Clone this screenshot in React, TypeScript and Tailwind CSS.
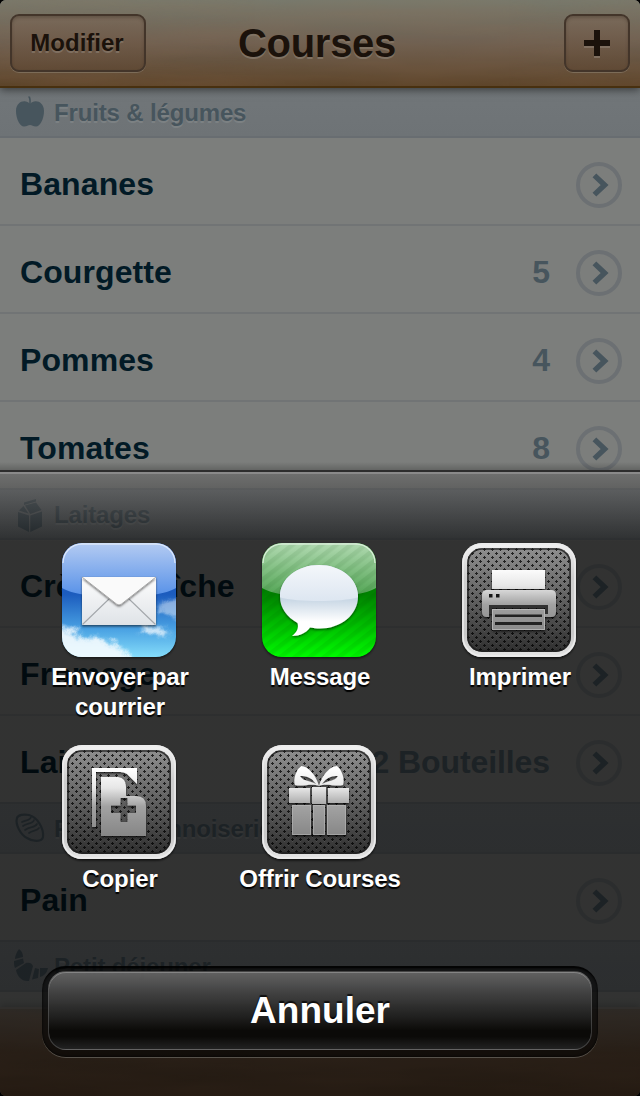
import React from "react";

function Chevron() {
  return (
    <svg width="46" height="46" viewBox="0 0 46 46" className="block shrink-0">
      <circle cx="23" cy="23" r="21" fill="none" stroke="#6c7073" strokeWidth="4" />
      <path d="M18.400 13.400 L28.600 23 L18.400 32.600" fill="none" stroke="#47555d" strokeWidth="5.400" />
    </svg>
  );
}

function Row({ name, qty, last }: { name: string; qty?: string; last?: boolean }) {
  return (
    <div
      className={
        "flex h-[88px] items-center border-b-2 pl-5 pr-[18px] pt-2 " +
        (last ? "border-[#696e71]" : "border-[#717475]")
      }
    >
      <span className="-mt-[2px] flex-1 text-[32px] leading-none font-bold tracking-[0.1px] text-[#021a26]">{name}</span>
      {qty && (
        <span className="-mt-[2px] mr-[26px] text-[32px] leading-none font-bold tracking-[-0.1px] text-[#47555d]">{qty}</span>
      )}
      <Chevron />
    </div>
  );
}

function Section({ title, icon }: { title: string; icon: React.ReactNode }) {
  return (
    <div className="flex h-[50px] items-center border-b-2 border-[#686d71] bg-linear-to-b from-[#717679] to-[#6e7376] pl-3">
      <svg width="36" height="40" viewBox="0 0 36 40" className="block shrink-0">
        {icon}
      </svg>
      <span className="ml-[6px] mt-[2px] whitespace-nowrap text-[24px] leading-none font-bold tracking-[-0.15px] text-[#47555d] [text-shadow:0_2px_0_#7c8183]">
        {title}
      </span>
    </div>
  );
}

const apple = (
  <g fill="#47555d">
    <path d="M18 12 C14 7 4 9 4 19 C4 27 8 34.500 12 34.500 C15 34.500 16 33 18 33 C20 33 21 34.500 24 34.500 C28 34.500 32 27 32 19 C32 9 22 7 18 12Z" />
    <path d="M16 4.500 L18 4.500 C19 7 19 9 18.600 13 L17 13 C17.600 9 17.400 7 16 4.500Z" />
  </g>
);

const milk = (
  <g fill="#47555d">
    <path d="M6 18 L17 21.500 V38 L6 32.500Z M18.300 21.500 L30 17.500 V32.500 L18.300 38Z" />
    <path d="M7 16.500 L11.500 12 L16.500 19.500Z M13 11.500 L24 8.500 L29.500 16 L18.300 20Z M12 8.500 L24 5 V7.400 L12 11Z" />
  </g>
);

const bread = (
  <g fill="none" stroke="#47555d" strokeWidth="1.700" strokeLinecap="round">
    <path d="M5 10 C6 6.500 12 6 17 7 C25 9 32 20 31 29 C30 34 21 34 15 30 C9 27 3 17 5 10Z" strokeWidth="2.200" />
    <path d="M10 14 C13 12 18 13 19 9 M11 18 C15 15 21 16 22 12 M13 22 C18 18 23 20 25 16 M17 25 C21 22 25 23 27 20" />
  </g>
);

const croissant = (
  <g fill="#47555d">
    <path d="M7 3 C10 5 11 8 11 11 L3 13 C3 9 5 6 7 3Z" />
    <path d="M2 15 L11 12.500 L12 17 L3 22 C2 20 2 18 2 15Z M4 24 L14 17 C17 16 20 17 21 20 L17 35 C10 36 5 30 4 24Z" />
    <path d="M23 22 L27 23 L26 32 L20 33.500Z M28 22 L36 22 C35 27 32 30 28 31Z" />
  </g>
);

function WoodGrain({ height, seed }: { height: number; seed: number }) {
  const id = "grain" + seed;
  return (
    <svg width="640" height={height} className="absolute inset-0 block opacity-20">
      <filter id={id} x="0" y="0" width="100%" height="100%">
        <feTurbulence type="fractalNoise" baseFrequency="0.005 0.04" numOctaves="4" seed={seed} />
        <feColorMatrix values="0 0 0 0 .32  0 0 0 0 .16  0 0 0 0 .09  1.6 0 0 0 -.4" />
      </filter>
      <rect width="640" height={height} filter={`url(#${id})`} />
    </svg>
  );
}

function Mesh({ id, children }: { id: string; children: React.ReactNode }) {
  return (
    <svg width="118" height="120" viewBox="-2 -2 118 120" className="block">
      <defs>
        <linearGradient id={id + "r"} x1="0" y1="0" x2="0" y2="1">
          <stop offset="0" stopColor="#f2f2f2" />
          <stop offset=".3" stopColor="#cecece" />
          <stop offset=".8" stopColor="#c8c8c8" />
          <stop offset="1" stopColor="#e6e6e6" />
        </linearGradient>
        <linearGradient id={id + "b"} x1="0" y1="0" x2="0" y2="1">
          <stop offset="0" stopColor="#8e8e8e" />
          <stop offset=".5" stopColor="#606060" />
          <stop offset="1" stopColor="#2f2f2f" />
        </linearGradient>
        <linearGradient id={id + "g"} gradientUnits="userSpaceOnUse" x1="0" y1="24" x2="0" y2="92">
          <stop offset="0" stopColor="#fff" />
          <stop offset=".28" stopColor="#e6e6e6" />
          <stop offset=".55" stopColor="#a2a2a2" />
          <stop offset="1" stopColor="#858585" />
        </linearGradient>
        <pattern id={id + "p"} width="8" height="8" patternUnits="userSpaceOnUse" x="5" y="5">
          <path d="M1 0h1v1h1v1h-1v1h-1v-1h-1v-1h1z M5 4h1v1h1v1h-1v1h-1v-1h-1v-1h1z" fill="#000" fillOpacity=".75" />
          <path d="M1 3h1v1h-1z M5 7h1v1h-1z" fill="#fff" fillOpacity=".1" />
        </pattern>
        <filter id={id + "s"} x="-20%" y="-20%" width="140%" height="140%">
          <feDropShadow dx="0" dy="1.500" stdDeviation="1" floodOpacity=".75" />
        </filter>
      </defs>
      <rect width="114" height="114" rx="20" fill={`url(#${id}r)`} filter={`url(#${id}s)`} />
      <rect x="1" y="1" width="112" height="112" rx="19" fill="none" stroke="#ececec" strokeWidth="1.600" />
      <rect x="5" y="5" width="104" height="104" rx="15" fill={`url(#${id}b)`} />
      <rect x="5" y="5" width="104" height="104" rx="15" fill={`url(#${id}p)`} />
      <rect x="6" y="6" width="102" height="102" rx="14" fill="none" stroke="#1c1c1c" strokeOpacity=".8" strokeWidth="1.600" />
      <g fill={`url(#${id}g)`} filter={`url(#${id}s)`}>
        {children}
      </g>
    </svg>
  );
}

const TILE = "M20 0H94A20 20 0 0 1 114 20V94A20 20 0 0 1 94 114H20A20 20 0 0 1 0 94V20A20 20 0 0 1 20 0Z";

function MailIcon() {
  return (
    <svg width="118" height="120" viewBox="-2 -2 118 120" className="block">
      <defs>
        <clipPath id="mc"><path d={TILE} /></clipPath>
        <linearGradient id="msky" x1="0" y1="0" x2="0" y2="1">
          <stop offset="0" stopColor="#1f52b4" />
          <stop offset=".45" stopColor="#1c5cbe" />
          <stop offset=".75" stopColor="#48a0e2" />
          <stop offset="1" stopColor="#84dcfa" />
        </linearGradient>
        <linearGradient id="mgl" x1="0" y1="0" x2="0" y2="1">
          <stop offset="0" stopColor="#b4cbf2" />
          <stop offset="1" stopColor="#5590e8" />
        </linearGradient>
        <linearGradient id="menv" x1="0" y1="0" x2="0" y2="1">
          <stop offset="0" stopColor="#fdfdfd" />
          <stop offset="1" stopColor="#dfe3e7" />
        </linearGradient>
        <filter id="cloud" x="-30" y="40" width="180" height="100" filterUnits="userSpaceOnUse">
          <feGaussianBlur stdDeviation="2.200" result="b" />
          <feTurbulence type="fractalNoise" baseFrequency=".1" numOctaves="3" seed="4" result="n" />
          <feDisplacementMap in="b" in2="n" scale="12" xChannelSelector="R" yChannelSelector="G" />
          <feGaussianBlur stdDeviation=".7" />
        </filter>
        <filter id="msh" x="-20%" y="-20%" width="140%" height="150%">
          <feDropShadow dx="0" dy="1.500" stdDeviation="1.200" floodOpacity=".55" />
        </filter>
      </defs>
      <path d={TILE} fill="#111" filter="url(#msh)" />
      <g clipPath="url(#mc)">
        <rect width="114" height="114" fill="url(#msky)" />
        <g fill="#fff" filter="url(#cloud)">
          <path d="M-12 82 C4 84 14 89 24 96 C36 93 46 97 54 104 C62 106 70 112 72 122 H-12Z" fillOpacity=".85" />
          <path d="M76 87 C84 82 98 82 110 90 C100 93 88 94 76 87Z" fillOpacity=".75" />
          <path d="M96 66 C100 57 110 54 122 56 V74 C110 76 100 74 96 66Z" fillOpacity=".45" />
        </g>
        <path d="M0 0H114V45C96 57 18 57 0 45Z" fill="url(#mgl)" />
        <path d="M1 20A19 19 0 0 1 20 1H94A19 19 0 0 1 113 20" fill="none" stroke="#dbe7fa" strokeWidth="1.300" />
      </g>
      <rect x="20" y="34" width="74" height="48" fill="url(#menv)" filter="url(#msh)" />
      <path d="M20.500 81.500 L47 56 M93.500 81.500 L67 56" stroke="#a4a8ac" strokeWidth="1.100" />
      <path d="M20 34H94L59.500 61Q57 63 54.500 61Z" fill="#fafafa" filter="url(#msh)" />
      <path d="M20 34L54.500 61Q57 63 59.500 61L94 34" fill="none" stroke="#a0a0a0" strokeWidth=".9" />
    </svg>
  );
}

function MessageIcon() {
  const bubble =
    "M57 22C78.500 22 96 35.500 96 53.500C96 72 78.500 85.500 58 85.500C54.500 85.500 51 85 48 84.500C44 90 38 93 30 93C35 89 37 85 35.500 80C25 74 18 65 18 53.500C18 35.500 35.500 22 57 22Z";
  return (
    <svg width="118" height="120" viewBox="-2 -2 118 120" className="block">
      <defs>
        <clipPath id="gc"><path d={TILE} /></clipPath>
        <clipPath id="gb"><path d={bubble} /></clipPath>
        <linearGradient id="gg" x1="0" y1="0" x2="0" y2="1">
          <stop offset="0" stopColor="#006a00" />
          <stop offset=".45" stopColor="#008200" />
          <stop offset="1" stopColor="#00fa00" />
        </linearGradient>
        <linearGradient id="ggl" x1="0" y1="0" x2="0" y2="1">
          <stop offset="0" stopColor="#b2dab2" />
          <stop offset="1" stopColor="#4fa351" />
        </linearGradient>
        <linearGradient id="gw" x1="0" y1="0" x2="0" y2="1">
          <stop offset="0" stopColor="#c3d3e2" />
          <stop offset=".5" stopColor="#cbd9e6" />
          <stop offset=".8" stopColor="#fff" />
        </linearGradient>
        <linearGradient id="gw2" x1="0" y1="0" x2="0" y2="1">
          <stop offset="0" stopColor="#f5f8fb" />
          <stop offset="1" stopColor="#dde6f1" />
        </linearGradient>
        <pattern id="gs" width="10" height="9" patternUnits="userSpaceOnUse" patternTransform="rotate(-38)">
          <rect width="10" height="4.500" fill="#003c00" fillOpacity=".08" />
        </pattern>
        <filter id="gsh" x="-20%" y="-20%" width="140%" height="150%">
          <feDropShadow dx="0" dy="1.500" stdDeviation="1.300" floodOpacity=".55" />
        </filter>
      </defs>
      <path d={TILE} fill="#111" filter="url(#gsh)" />
      <g clipPath="url(#gc)">
        <rect width="114" height="114" fill="url(#gg)" />
        <path d="M0 0H114V45C96 57 18 57 0 45Z" fill="url(#ggl)" />
        <rect width="114" height="114" fill="url(#gs)" />
        <path d="M1 20A19 19 0 0 1 20 1H94A19 19 0 0 1 113 20" fill="none" stroke="#d6ecd6" strokeWidth="1.300" />
      </g>
      <path d={bubble} fill="url(#gw)" filter="url(#gsh)" />
      <g clipPath="url(#gb)">
        <path d="M16 20H98V53.500C82 59.500 32 59.500 16 53.500Z" fill="url(#gw2)" />
      </g>
    </svg>
  );
}

function PrintIcon() {
  return (
    <Mesh id="pr">
      <rect x="30" y="27" width="53" height="19" />
      <path d="M25 47H89Q94 47 94 52V69Q94 74 89 74H83V63H27V74H25Q20 74 20 69V52Q20 47 25 47Z" />
      <path d="M27 51h3.500v3.500h-3.500z M34 51h3.500v3.500h-3.500z" fill="#161616" />
      <path d="M27 62H86V71H83V65H30V71H27Z" fill="#333" />
      <path d="M30 66H83V87H30Z" />
      <path d="M33 71.500H80V74H33Z M33 79H80V82H33Z" fill="#222" />
      <path d="M30.500 66.500H82.500V86.500H30.500Z" fill="none" stroke="#ccc" strokeOpacity=".6" />
    </Mesh>
  );
}

function CopyIcon() {
  return (
    <Mesh id="cp">
      <path d="M30 23H75V39L65 29Q62 27 58 27H34V82H30Z" />
      <path
        fillRule="evenodd"
        d="M39 32H56Q64 33 64 42V51H74Q84 51 84 61V91H39Z M58.500 53V60.500H49V68H58.500V77H65.500V68H74V60.500H65.500V53Z"
      />
    </Mesh>
  );
}

function GiftIcon() {
  return (
    <Mesh id="gi">
      <path
        fillRule="evenodd"
        d="M57 41C54 30 46 21 39 21C34 25 31 34 33 40C40 42 50 38 57 41Z M54 39C49 32 45 31 38 31C42 37 47 35 54 39Z"
      />
      <path
        fillRule="evenodd"
        d="M57 41C60 30 68 21 75 21C80 25 83 34 81 40C74 42 64 38 57 41Z M60 39C65 32 69 31 76 31C72 37 67 35 60 39Z"
      />
      <path d="M27 43H48V58H27Z M50 42H64V59H50Z M66 43H87V58H66Z" />
      <path d="M30 60H49V90H30Z M51 60H63V90H51Z M65 60H84V90H65Z" />
      <path
        d="M30.500 60.500H48.500V89.500H30.500Z M51.500 60.500H62.500V89.500H51.500Z M65.500 60.500H83.500V89.500H65.500Z"
        fill="none"
        stroke="#bdbdbd"
        strokeOpacity=".5"
      />
    </Mesh>
  );
}

function Action({ label, children }: { label: string; children: React.ReactNode }) {
  return (
    <div className="flex h-[202px] w-[200px] flex-col items-center">
      <div className="-mt-[2px] mr-[2px] h-[121px]">{children}</div>
      <div className="w-[170px] text-center text-[24px] leading-[30px] font-bold tracking-[-0.1px] text-white [text-shadow:0_2px_1px_#000]">
        {label}
      </div>
    </div>
  );
}

export default function App() {
  return (
    <div className="relative h-[1096px] w-[640px] overflow-hidden bg-black font-['Liberation_Sans',Arial,sans-serif]">
      <div className="flex h-full flex-col overflow-hidden rounded-[6px] bg-[#7c7e7c]">
        <header className="relative z-10 h-[88px] shrink-0 border-b-2 border-[#48300f] bg-linear-to-b from-[#777a6d] via-[#6e6051] to-[#5c4429] shadow-[0_2px_8px_rgba(0,0,0,0.5)]">
          <WoodGrain height={86} seed={7} />
          <div className="relative flex h-[86px] items-center justify-between px-[10px]">
            <div className="flex h-[58px] w-[136px] items-center justify-center rounded-[9px] border-2 border-[#43352a] bg-linear-to-b from-[#7b6858]/70 to-[#5d4733]/70 pr-[2px] text-[24px] font-bold text-[#1b120b] shadow-[0_1px_0_#7c6c58,inset_0_2px_3px_rgba(50,35,25,0.3)] [text-shadow:0_2px_0_#7f6f60]">
              Modifier
            </div>
            <h1 className="flex-1 pr-[76px] text-center text-[40px] leading-none font-bold tracking-[-0.3px] text-[#1b120b] [text-shadow:0_2px_0_#807263]">
              Courses
            </h1>
            <div className="flex h-[58px] w-[66px] items-center justify-center rounded-[9px] border-2 border-[#43352a] bg-linear-to-b from-[#7b6858]/70 to-[#5d4733]/70 pt-[2px] shadow-[0_1px_0_#7c6c58,inset_0_2px_3px_rgba(50,35,25,0.3)]">
              <svg width="26" height="28" viewBox="0 0 26 28">
                <path d="M10 2h6v10h10v6H16v10h-6V18H0v-6h10z" fill="#7f6f60" />
                <path d="M10 0h6v10h10v6H16v10h-6V16H0v-6h10z" fill="#1b120b" />
              </svg>
            </div>
          </div>
        </header>
        <main className="flex-1 overflow-hidden">
          <Section title="Fruits & légumes" icon={apple} />
          <Row name="Bananes" />
          <Row name="Courgette" qty="5" />
          <Row name="Pommes" qty="4" />
          <Row name="Tomates" qty="8" last />
          <Section title="Laitages" icon={milk} />
          <Row name="Crème fraîche" />
          <Row name="Fromage" />
          <Row name="Lait" qty="2 Bouteilles" last />
          <Section title="Pain & viennoiseries" icon={bread} />
          <Row name="Pain" last />
          <Section title="Petit déjeuner" icon={croissant} />
        </main>
        <footer className="relative h-[89px] shrink-0 border-t-2 border-[#77736e] bg-linear-to-b from-[#6d665d] via-[#624b37] to-[#58402b] shadow-[0_-2px_7px_rgba(0,0,0,0.2)]">
          <WoodGrain height={87} seed={12} />
        </footer>
      </div>

      <div className="absolute inset-x-0 top-[462px] bottom-0 z-20 flex flex-col">
        <div className="h-2 shrink-0 bg-linear-to-b from-black/0 to-black/20" />
        <div className="h-[2px] shrink-0 bg-[#2d2d2d]" />
        <div className="h-[2px] shrink-0 bg-[#8a8a8a]" />
        <div className="flex flex-1 flex-col bg-[linear-gradient(to_bottom,rgba(100,100,100,0.6)_0px,rgba(5,5,5,0.6)_66px,rgba(0,0,0,0.6)_67px)]">
          <div className="flex flex-wrap pt-[69px] pl-5">
            <Action label="Envoyer par courrier"><MailIcon /></Action>
            <Action label="Message"><MessageIcon /></Action>
            <Action label="Imprimer"><PrintIcon /></Action>
            <Action label="Copier"><CopyIcon /></Action>
            <Action label="Offrir Courses"><GiftIcon /></Action>
          </div>
          <div className="mx-[42px] mt-[19px] h-[91px] rounded-[24px] border-t-2 border-black/80 bg-black/55 px-[6px] pt-[3px] shadow-[0_1px_0_#57524b,inset_0_0_3px_#000]">
            <div className="flex h-[79px] items-center justify-center rounded-[18px] border border-[#66666688] bg-[linear-gradient(to_bottom,rgba(108,108,108,0.88)_0%,rgba(66,66,66,0.92)_30%,#20201f_58%,#0b0a08_76%,#0b0a08_84%,#222_100%)] text-[37px] font-bold text-white shadow-[inset_0_1px_0_#858585] [text-shadow:0_-2px_1px_rgba(0,0,0,0.75)]">
              Annuler
            </div>
          </div>
        </div>
      </div>
    </div>
  );
}
